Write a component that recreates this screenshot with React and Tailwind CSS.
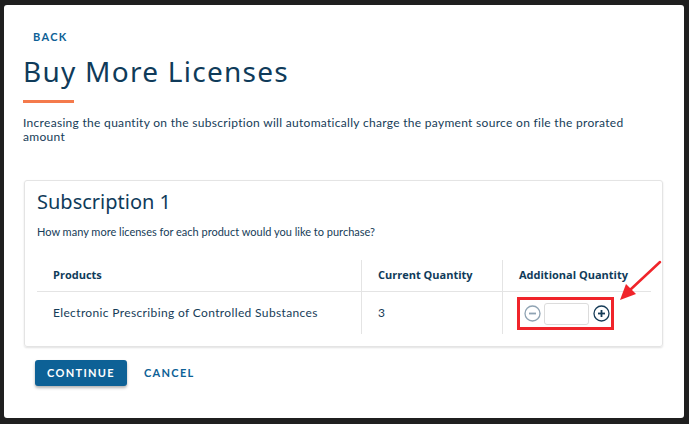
import React from "react";

export default function App() {
  return (
    <div className="w-[689px] h-[424px] bg-[#1f1f1f] pt-[5px] pl-[4px] overflow-hidden" style={{ fontFamily: "Lato, 'Noto Sans', sans-serif" }}>
      <div className="relative w-[680px] h-[413px] bg-white rounded-[3px] pl-[19px] pr-[20px] text-[#163c58]">
        <div className="pt-[25px] pl-[10px] text-[11px] font-bold tracking-[0.12em] text-[#0d6196] leading-[14px]">BACK</div>
        <h1 className="mt-[9px] text-[28px] leading-[36px] text-[#0f3b5a] tracking-[0.045em]" style={{ fontFamily: "'Noto Sans', sans-serif" }}>Buy More Licenses</h1>
        <div className="mt-[11px] w-[51px] h-[3px] bg-[#f47a4c]" />
        <p className="mt-[13px] text-[12px] leading-[14px] tracking-[0.025em] text-[#163c58] w-[625px]">
          Increasing the quantity on the subscription will automatically charge the payment source on file the prorated amount
        </p>

        <div className="mt-[36px] ml-[1px] w-[639px] h-[167px] border border-[#e4e4e4] rounded-[3px] shadow-[0_1px_2px_rgba(0,0,0,0.12)] pl-[12px] pr-[13px]">
          <h2 className="pt-[9px] text-[20px] leading-[24px] text-[#0f3b5a]" style={{ fontFamily: "'Noto Sans', sans-serif" }}>Subscription 1</h2>
          <p className="mt-[11px] text-[11px] leading-[14px]">How many more licenses for each product would you like to purchase?</p>
          <div className="mt-[21px] w-[614px]">
            <div className="flex h-[32px] items-stretch border-b border-[#e4e4e4] text-[11px] font-bold text-[#0f3b5a]" style={{ fontFamily: "'Open Sans', sans-serif" }}>
              <div className="w-[325px] pl-[16px] flex items-center border-r border-[#e4e4e4]">Products</div>
              <div className="w-[141px] pl-[16px] flex items-center border-r border-[#e4e4e4]">Current Quantity</div>
              <div className="flex-1 pl-[16px] flex items-center">Additional Quantity</div>
            </div>
            <div className="flex h-[42px] items-stretch text-[12px] tracking-[0.03em]">
              <div className="w-[325px] pl-[16px] flex items-center border-r border-[#e4e4e4]">Electronic Prescribing of Controlled Substances</div>
              <div className="w-[141px] pl-[16px] flex items-center border-r border-[#e4e4e4]">3</div>
              <div className="flex-1 pl-[14px] pt-[5px]">
                <div className="w-[97px] h-[33px] border-[3px] border-[#f0242a] flex items-center gap-[3px] pl-[4px]">
                  <svg width="17" height="17" viewBox="0 0 17 17">
                    <circle cx="8.5" cy="8.5" r="7.5" fill="none" stroke="#8fa3b3" strokeWidth="1.3" />
                    <line x1="5" y1="8.5" x2="12" y2="8.5" stroke="#8fa3b3" strokeWidth="1.8" />
                  </svg>
                  <div className="w-[45px] h-[22px] border border-[#dcdcdc] rounded-[3px] bg-white" />
                  <svg width="17" height="17" viewBox="0 0 17 17" className="ml-[1px]">
                    <circle cx="8.5" cy="8.5" r="7.5" fill="none" stroke="#163c58" strokeWidth="1.3" />
                    <line x1="5" y1="8.5" x2="12" y2="8.5" stroke="#163c58" strokeWidth="1.8" />
                    <line x1="8.5" y1="5" x2="8.5" y2="12" stroke="#163c58" strokeWidth="1.8" />
                  </svg>
                </div>
              </div>
            </div>
          </div>
        </div>

        <div className="mt-[13px] ml-[12px] flex items-center gap-[17px]">
          <button className="w-[92px] h-[26px] bg-[#0d6196] rounded-[3px] shadow-[0_2px_3px_rgba(0,0,0,0.3)] text-white text-[11px] font-bold tracking-[0.12em]">CONTINUE</button>
          <button className="text-[11px] font-bold tracking-[0.12em] text-[#0d6196]">CANCEL</button>
        </div>

        <svg className="absolute left-[612px] top-[254px]" width="50" height="45" viewBox="0 0 50 45">
          <line x1="44" y1="3" x2="14" y2="31" stroke="#f0242a" strokeWidth="2.5" strokeLinecap="round" />
          <polygon points="4,41 10,25 20,35" fill="#f0242a" />
        </svg>
      </div>
    </div>
  );
}
